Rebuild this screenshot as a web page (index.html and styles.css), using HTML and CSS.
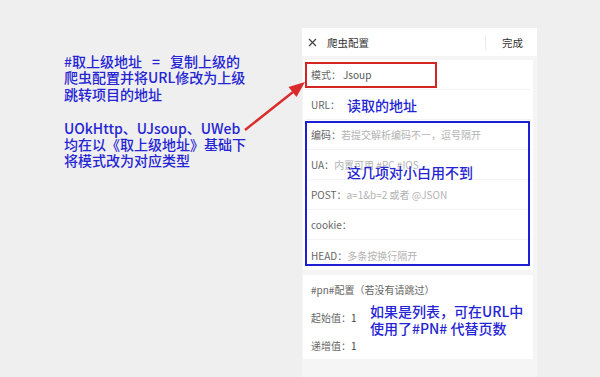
FILE: index.html
```html
<!DOCTYPE html>
<html>

<head>
  <meta charset="UTF-8">
  <title>爬虫配置</title>
  <link rel="stylesheet" href="styles.css">
</head>

<body>
  <div class="note">
    <p>#取上级地址<span class="eq">=</span>复制上级的<br>爬虫配置并将URL修改为上级<br>跳转项目的地址</p>
    <p>UOkHttp、UJsoup、UWeb<br>均在以《取上级地址》基础下<br>将模式改为对应类型</p>
  </div>

  <div class="phone">
    <div class="top-bar">
      <svg class="close-icon" width="9" height="9" viewBox="0 0 9 9">
        <path d="M1 1L8 8M8 1L1 8" stroke="#444" stroke-width="1.3" fill="none" />
      </svg>
      <span class="title">爬虫配置</span>
      <span class="divider"></span>
      <span class="done">完成</span>
    </div>

    <div class="card card-main">
      <div class="row"><span class="label">模式：</span><span class="value">Jsoup</span></div>
      <div class="row"><span class="label">URL：</span><span class="hint-inline">读取的地址</span></div>
      <div class="row"><span class="label">编码：</span><span class="ph">若提交解析编码不一，逗号隔开</span></div>
      <div class="row"><span class="label">UA：</span><span class="ph">内置可用 #PC #IOS</span></div>
      <div class="row"><span class="label">POST：</span><span class="ph">a=1&amp;b=2 或者 @JSON</span></div>
      <div class="row"><span class="label">cookie：</span></div>
      <div class="row last"><span class="label">HEAD：</span><span class="ph">多条按换行隔开</span></div>

      <div class="mark mark-red"></div>
      <div class="mark mark-blue"></div>
      <div class="hint hint-unused">这几项对小白用不到</div>
    </div>

    <div class="card card-pn">
      <div class="row"><span class="label">#pn#配置（若没有请跳过）</span></div>
      <div class="row"><span class="label">起始值：</span><span class="value">1</span></div>
      <div class="row last"><span class="label">递增值：</span><span class="value">1</span></div>

      <div class="hint hint-pn">如果是列表，可在URL中<br>使用了#PN# 代替页数</div>
    </div>
  </div>

  <!-- arrow from the note to the mode field -->
  <svg class="arrow" width="600" height="377" viewBox="0 0 600 377">
    <line x1="245" y1="130" x2="293" y2="92" stroke="#d92b2b" stroke-width="2.4" />
    <polygon points="305,82 296.5,97 288.5,87" fill="#d92b2b" />
  </svg>
</body>

</html>
```

FILE: styles.css
```css
body {
  margin: 0;
  height: 377px;
  display: flex;
  font-family: "Noto Sans CJK SC", "Noto Sans", sans-serif;
  background-color: #efefef;
  overflow: hidden;
  position: relative;
}

.note {
  flex: 0 0 302px;
  padding: 53px 0 0 64px;
  box-sizing: border-box;
  color: #2424d4;
  font-size: 14px;
  font-weight: 500;
  line-height: 16.3px;
}

.note p {
  margin: 0 0 18px;
  white-space: nowrap;
}

.eq {
  margin: 0 10px;
}

.phone {
  flex: 0 0 235px;
  margin-top: 28px;
  background: #f5f5f5;
}

.top-bar {
  height: 28px;
  display: flex;
  align-items: center;
  background: #fff;
  color: #333;
}

.close-icon {
  margin: 0 10px 0 6px;
}

.title {
  font-size: 10.5px;
}

.divider {
  margin-left: auto;
  width: 1px;
  height: 15px;
  background: #ececec;
}

.done {
  font-size: 10.5px;
  margin: 0 14px 0 16px;
}

.card {
  position: relative;
  margin: 4px 4px 0 1px;
  padding: 0 2px;
  background: #fff;
}

.card-pn {
  margin-top: 5px;
}

.row {
  height: 30px;
  display: flex;
  align-items: center;
  padding-left: 6px;
  border-bottom: 1px solid #f3f3f3;
  box-sizing: border-box;
  font-size: 10px;
  color: #666;
  white-space: nowrap;
}

.card-pn .row {
  height: 28px;
  border-bottom: none;
}

.row.last {
  border-bottom: none;
}

.value {
  color: #555;
  margin-left: 2px;
}

.card-pn .value {
  margin-left: 0;
  color: #444;
}

.ph {
  color: #b3b3b3;
}

.hint-inline {
  margin-left: 7px;
  color: #2424d4;
  font-size: 14px;
  font-weight: 500;
}

.hint {
  position: absolute;
  color: #2424d4;
  font-size: 14px;
  font-weight: 500;
  line-height: 17px;
  white-space: nowrap;
}

.hint-unused {
  left: 44px;
  top: 104px;
}

.hint-pn {
  left: 67px;
  top: 28px;
}

.mark {
  position: absolute;
  box-sizing: border-box;
}

.mark-red {
  left: 2px;
  top: 2px;
  width: 132px;
  height: 26px;
  border: 2px solid #d42424;
}

.mark-blue {
  left: 2px;
  top: 61px;
  width: 225px;
  height: 145px;
  border: 2px solid #1e1ed2;
}

.arrow {
  position: absolute;
  left: 0;
  top: 0;
  pointer-events: none;
}
```
